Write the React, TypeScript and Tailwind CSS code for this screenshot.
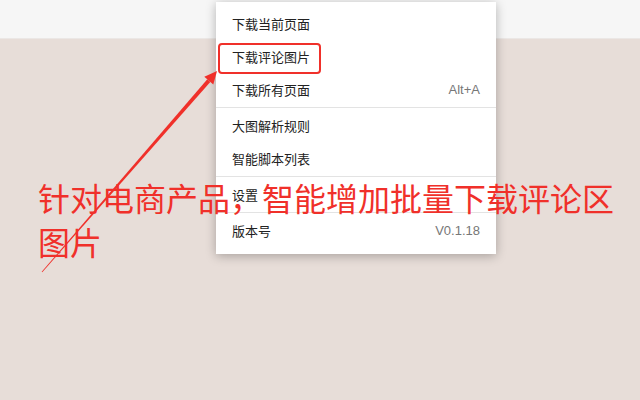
import { Fragment } from "react";

const cjk = "font-['Noto_Sans_CJK_SC','Noto_Sans',sans-serif]";

// Menu rows; null marks a separator line
const menuItems: ({ label: string; hint?: string } | null)[] = [
  { label: "下载当前页面" },
  { label: "下载评论图片" },
  { label: "下载所有页面", hint: "Alt+A" },
  null,
  { label: "大图解析规则" },
  { label: "智能脚本列表" },
  null,
  { label: "设置" },
  null,
  { label: "版本号", hint: "V0.1.18" },
];

function Arrow() {
  return (
    <svg className="absolute inset-0 pointer-events-none" width={640} height={400} viewBox="0 0 640 400">
      <polygon points="42.3,272.2 41.7,271.8 207.3,79.3 210.3,81.9" fill="#f0302a" />
      <polygon points="217,71 204.3,76.7 213.3,84.5" fill="#f0302a" />
    </svg>
  );
}

function ContextMenu() {
  return (
    <div className="absolute left-[216px] top-[2px] w-[280px] bg-white pt-[5px] pb-[7px] shadow-[0_2px_10px_rgba(0,0,0,0.28)]">
      {menuItems.map((item, index) => (
        <Fragment key={index}>
          {item ? (
            <div className="flex h-[33px] items-center justify-between px-[16px]">
              <span className={`${cjk} text-[13px] text-[#222]`}>{item.label}</span>
              {item.hint && (
                <span className="font-['Liberation_Sans',sans-serif] text-[13px] text-[#777]">{item.hint}</span>
              )}
            </div>
          ) : (
            <div className="my-px h-px bg-[#e3e3e3]" />
          )}
        </Fragment>
      ))}
    </div>
  );
}

export default function App() {
  return (
    <div className="relative h-[400px] w-[640px] overflow-hidden bg-[#e7ddd8]">
      <div className="h-[39px] border-b border-[#ebe7e5] bg-[#f6f6f6]" />
      <ContextMenu />
      <div className="absolute left-[218px] top-[43px] h-[31px] w-[103px] rounded-[4px] border-2 border-[#f0302a]" />
      <Arrow />
      <div className={`absolute left-[38px] top-[175px] ${cjk} text-[32px] leading-[44px] text-[#f0302a]`}>
        针对电商产品，智能增加批量下载评论区
        <br />
        图片
      </div>
    </div>
  );
}
